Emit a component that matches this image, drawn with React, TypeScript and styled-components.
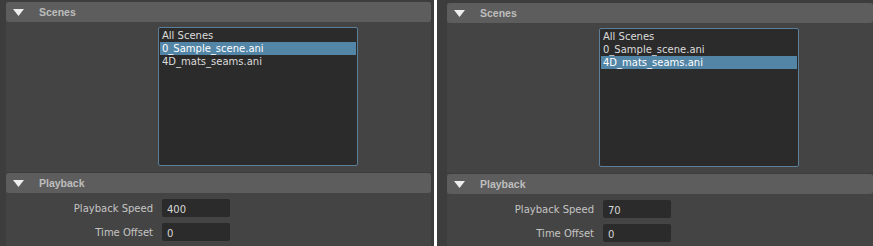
import React from 'react';
import styled, { createGlobalStyle } from 'styled-components';

const GlobalStyle = createGlobalStyle`
	html, body {
		margin: 0;
		padding: 0;
		background: #3d3d3d;
	}
	body {
		font-family: 'DejaVu Sans', 'Liberation Sans', sans-serif;
	}
`;

interface SceneEditorProps {
	scenes: string[];
	selected: number;
	speed: string;
	offset: string;
	$left: number;
	$top: number;
}

function Frame({ title, children }: { title: string; children: React.ReactNode }) {
	return (
		<FrameBox>
			<FrameHeader>
				<Arrow width="11" height="7" viewBox="0 0 11 7">
					<polygon points="0,0 11,0 5.5,7" fill="#eeeeee" />
				</Arrow>
				<FrameTitle>{title}</FrameTitle>
			</FrameHeader>
			{children}
		</FrameBox>
	);
}

function SceneEditor({ scenes, selected, speed, offset, $left, $top }: SceneEditorProps) {
	return (
		<Panel $left={$left} $top={$top}>
			<Frame title="Scenes">
				<ScenesBody>
					<SceneList>
						{scenes.map((s, i) => (
							<SceneItem key={s} $active={i === selected}>
								{s}
							</SceneItem>
						))}
					</SceneList>
				</ScenesBody>
			</Frame>
			<Frame title="Playback">
				<PlaybackBody>
					<FieldRow>
						<FieldLabel>Playback Speed</FieldLabel>
						<FieldInput defaultValue={speed} />
					</FieldRow>
					<FieldRow>
						<FieldLabel>Time Offset</FieldLabel>
						<FieldInput defaultValue={offset} />
					</FieldRow>
				</PlaybackBody>
			</Frame>
		</Panel>
	);
}

export default function App() {
	const scenes = ['All Scenes', '0_Sample_scene.ani', '4D_mats_seams.ani'];
	return (
		<>
			<GlobalStyle />
			<Screen>
				<SceneEditor scenes={scenes} selected={1} speed="400" offset="0" $left={6} $top={2} />
				<Divider />
				<SceneEditor scenes={scenes} selected={2} speed="70" offset="0" $left={10} $top={3} />
			</Screen>
		</>
	);
}

const Screen = styled.div`
	display: flex;
	width: 873px;
	height: 246px;
	overflow: hidden;
	background: #3d3d3d;
`;

const Divider = styled.div`
	width: 3px;
	flex-shrink: 0;
	background: #ffffff;
`;

const Panel = styled.div<{ $left: number; $top: number }>`
	width: 434px;
	flex-shrink: 0;
	display: flex;
	flex-direction: column;
	gap: 1px;
	padding: ${({ $top }) => $top}px 3px 0 ${({ $left }) => $left}px;
	box-sizing: border-box;
	&:last-child {
		width: auto;
		flex: 1;
		padding-right: 0;
	}
`;

const FrameBox = styled.div`
	display: flex;
	flex-direction: column;
	background: #444444;
`;

const FrameHeader = styled.div`
	height: 20px;
	display: flex;
	align-items: center;
	background: #5d5d5d;
	border-radius: 3px;
`;

const Arrow = styled.svg`
	margin-left: 7px;
	margin-top: 1px;
	flex-shrink: 0;
`;

const FrameTitle = styled.span`
	margin-left: 15px;
	font-family: 'Liberation Sans', Arial, sans-serif;
	font-size: 10.5px;
	font-weight: bold;
	color: #bdbdbd;
`;

const ScenesBody = styled.div`
	padding: 5px 0 6px 152px;
`;

const SceneList = styled.div`
	width: 200px;
	height: 139px;
	box-sizing: border-box;
	background: #2b2b2b;
	border: 1px solid #5b7f99;
	border-radius: 2px;
	padding: 1px;
`;

const SceneItem = styled.div<{ $active: boolean }>`
	height: 13px;
	line-height: 13px;
	padding-left: 2px;
	font-size: 10px;
	white-space: nowrap;
	color: ${({ $active }) => ($active ? '#ffffff' : '#dcdcdc')};
	background: ${({ $active }) => ($active ? '#5285a6' : 'transparent')};
`;

const PlaybackBody = styled.div`
	display: flex;
	flex-direction: column;
	gap: 6px;
	padding: 6px 0 10px;
`;

const FieldRow = styled.div`
	display: flex;
	align-items: center;
	gap: 9px;
`;

const FieldLabel = styled.span`
	width: 147px;
	text-align: right;
	font-size: 10px;
	color: #c4c4c4;
`;

const FieldInput = styled.input`
	width: 68px;
	height: 18px;
	box-sizing: border-box;
	border: none;
	outline: none;
	border-radius: 2px;
	background: #2b2b2b;
	color: #d8d8d8;
	font-family: 'DejaVu Sans', 'Liberation Sans', sans-serif;
	font-size: 10px;
	padding: 2px 0 0 5px;
`;
